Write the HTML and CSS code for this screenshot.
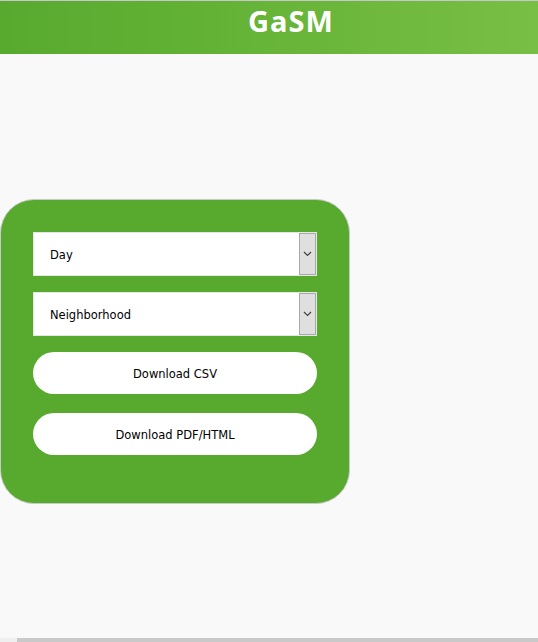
FILE: index.html
```html
<!DOCTYPE html>
<html>
<head>
<meta charset="utf-8">
<link rel="stylesheet" href="styles.css">
</head>
<body>
<header class="topbar"><h1 class="title">GaSM</h1></header>
<main class="content">
  <section class="panel">
    <div class="select">
      <span class="select-label">Day</span>
      <span class="select-arrow"><svg width="9" height="6" viewBox="0 0 9 6"><path d="M1 1 L4.5 4.5 L8 1" fill="none" stroke="#444" stroke-width="1.2"/></svg></span>
    </div>
    <div class="select">
      <span class="select-label">Neighborhood</span>
      <span class="select-arrow"><svg width="9" height="6" viewBox="0 0 9 6"><path d="M1 1 L4.5 4.5 L8 1" fill="none" stroke="#444" stroke-width="1.2"/></svg></span>
    </div>
    <button class="btn">Download CSV</button>
    <button class="btn btn-last">Download PDF/HTML</button>
  </section>
</main>
<div class="hscroll"><div class="hscroll-start"></div><div class="hscroll-thumb"></div></div>
</body>
</html>
```
FILE: styles.css
```css
html, body { margin: 0; padding: 0; }
body {
  background: #f9f9f9;
  font-family: "DejaVu Sans", Verdana, sans-serif;
  height: 642px;
  overflow: hidden;
  display: flex;
  flex-direction: column;
}
.topbar {
  height: 54px;
  border-top: 1px solid #c8c8c8;
  box-sizing: border-box;
  background: linear-gradient(90deg, #58aa2e 0%, #63b236 40%, #78bf45 100%);
  display: flex;
  justify-content: center;
  padding-left: 44px;
}
.title {
  margin: 0;
  color: #fff;
  font-family: "Open Sans", sans-serif;
  font-weight: 700;
  font-size: 29px;
  letter-spacing: 1px;
  line-height: 40px;
}
.content { flex: 1; padding-top: 145px; }
.panel {
  width: 284px;
  padding: 32px 32px 48px 32px;
  background: #58aa2f;
  border: 1px solid #c9c9c9;
  border-radius: 34px;
  display: flex;
  flex-direction: column;
}
.select {
  height: 44px;
  background: #fff;
  border: 1px solid #e6e6e6;
  box-sizing: border-box;
  display: flex;
  align-items: center;
  margin-bottom: 16px;
}
.select-label {
  flex: 1;
  padding-left: 16px;
  padding-top: 2px;
  font-size: 11.5px;
  color: #000;
}
.select-arrow {
  width: 17px;
  height: 42px;
  box-sizing: border-box;
  background: #dfdfdf;
  border: 1px solid #a9a9a9;
  display: flex;
  align-items: center;
  justify-content: center;
}
.btn {
  height: 42px;
  border: none;
  border-radius: 21px;
  background: #fff;
  font-family: "DejaVu Sans", Verdana, sans-serif;
  font-size: 11.5px;
  color: #000;
  margin-bottom: 19px;
  padding: 2px 0 0 0;
}
.btn-last { margin-bottom: 0; }
.hscroll {
  height: 4px;
  display: flex;
  background: #f9f9f9;
}
.hscroll-start { width: 17px; background: #efefef; }
.hscroll-thumb { flex: 1; background: #c9c9c9; }
```
